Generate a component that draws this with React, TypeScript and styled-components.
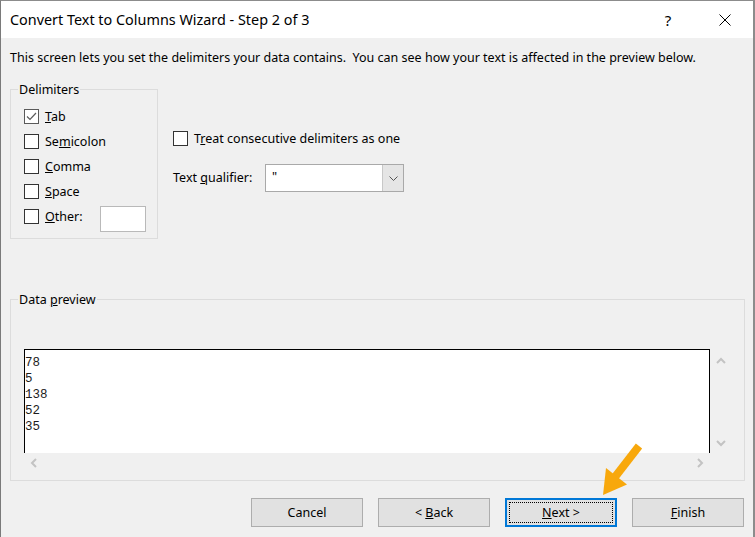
import styled, { createGlobalStyle } from "styled-components";

const GlobalStyle = createGlobalStyle`
  html, body {
    margin: 0;
    padding: 0;
    background: #f0f0f0;
  }
  body {
    font-family: "Noto Sans", "Open Sans", sans-serif;
    font-size: 12.5px;
    color: #000;
  }
`;

const Window = styled.div`
  position: relative;
  width: 755px;
  height: 537px;
  box-sizing: border-box;
  overflow: hidden;
  border-top: 1px solid #8c8c8c;
  border-left: 1px solid #7a7a7a;
  border-right: 2px solid #8c8c8c;
  background: #f0f0f0;
  display: flex;
  flex-direction: column;
`;

const TitleBar = styled.div`
  height: 37px;
  flex-shrink: 0;
  background: #fff;
  display: flex;
  align-items: center;
  padding: 0 5px 0 9px;
`;

const Title = styled.div`
  flex: 1;
  font-size: 14.4px;
  line-height: 20px;
`;

const TitleButton = styled.div`
  width: 46px;
  height: 37px;
  display: flex;
  align-items: center;
  justify-content: center;
  font-size: 15px;
  & + & {
    margin-left: 11px;
  }
`;

const Body = styled.div`
  flex: 1;
  display: flex;
  flex-direction: column;
  padding-left: 9px;
`;

const Intro = styled.p`
  margin: 12px 0 0;
  line-height: 16px;
  white-space: nowrap;
`;

const TopSection = styled.div`
  display: flex;
  margin-top: 23px;
`;

const GroupBox = styled.div<{ $width: number; $height: number }>`
  position: relative;
  box-sizing: border-box;
  width: ${(p) => p.$width}px;
  height: ${(p) => p.$height}px;
  border: 1px solid #dcdcdc;
`;

const GroupCaption = styled.span`
  position: absolute;
  top: -8px;
  left: 7px;
  padding: 0 1px;
  line-height: 16px;
  background: #f0f0f0;
`;

const DelimiterList = styled.div`
  display: flex;
  flex-direction: column;
  padding: 14px 0 0 13px;
`;

const CheckRow = styled.label`
  display: flex;
  align-items: center;
  height: 25px;
  gap: 6px;
  line-height: 16px;
`;

const Box = styled.span<{ $checked?: boolean }>`
  box-sizing: border-box;
  width: 15px;
  height: 15px;
  flex-shrink: 0;
  display: flex;
  align-items: center;
  justify-content: center;
  background: #fff;
  border: 1px solid ${(p) => (p.$checked ? "#5a5a5a" : "#333")};
`;

const OtherInput = styled.div`
  box-sizing: border-box;
  width: 46px;
  height: 26px;
  margin: 5px 11px 0 auto;
  background: #fff;
  border: 1px solid #b9b9b9;
`;

const Options = styled.div`
  display: flex;
  flex-direction: column;
  margin-left: 15px;
  padding-top: 37px;
`;

const QualifierRow = styled.div`
  display: flex;
  align-items: center;
  margin-top: 13px;
`;

const QualifierLabel = styled.span`
  width: 92px;
  line-height: 16px;
`;

const Select = styled.div`
  box-sizing: border-box;
  width: 139px;
  height: 28px;
  display: flex;
  background: #fff;
  border: 1px solid #a9a9a9;
`;

const SelectValue = styled.span`
  flex: 1;
  padding: 4px 0 0 6px;
  line-height: 16px;
`;

const SelectButton = styled.span`
  width: 20px;
  display: flex;
  align-items: center;
  justify-content: center;
  background: #e5e5e5;
  border-left: 1px solid #c8c8c8;
`;

const PreviewGroup = styled(GroupBox)`
  margin-top: 60px;
`;

const PreviewGrid = styled.div`
  display: grid;
  grid-template-columns: 686px 22px;
  grid-template-rows: 104px 22px;
  padding: 49px 0 0 13px;
`;

const PreviewBox = styled.pre`
  box-sizing: border-box;
  margin: 0;
  padding: 5px 0 0;
  background: #fff;
  border: 1px solid #000;
  border-bottom: none;
  font-family: "Liberation Mono", "DejaVu Sans Mono", monospace;
  font-size: 12.5px;
  line-height: 16px;
  color: #1c1c1c;
`;

const VScroll = styled.div`
  display: flex;
  flex-direction: column;
  justify-content: space-between;
  align-items: center;
  padding: 8px 0 6px;
`;

const HScroll = styled.div`
  display: flex;
  justify-content: space-between;
  align-items: center;
  padding: 0 6px 2px 6px;
`;

const ButtonRow = styled.div`
  display: flex;
  justify-content: flex-end;
  gap: 15px;
  width: 734px;
  margin-top: 17px;
`;

const Button = styled.div<{ $focused?: boolean }>`
  position: relative;
  box-sizing: border-box;
  width: 112px;
  height: 29px;
  display: flex;
  align-items: center;
  justify-content: center;
  line-height: 16px;
  background: #e1e1e1;
  border: ${(p) => (p.$focused ? "2px solid #0078d7" : "1px solid #adadad")};
  ${(p) =>
    p.$focused &&
    `
    &::after {
      content: "";
      position: absolute;
      inset: 2px;
      border: 1px dotted #000;
    }
  `}
`;

const Pointer = styled.svg`
  position: absolute;
  left: 595px;
  top: 440px;
  pointer-events: none;
`;

const Chevron = ({ dir }: { dir: "up" | "down" | "left" | "right" }) => {
  const pts = {
    up: "1,6 5,2 9,6",
    down: "1,2 5,6 9,2",
    left: "6,1 2,5 6,9",
    right: "3,1 7,5 3,9",
  }[dir];
  const w = dir === "up" || dir === "down" ? 10 : 9;
  const h = dir === "up" || dir === "down" ? 8 : 10;
  return (
    <svg width={w} height={h} viewBox={`0 0 ${w} ${h}`}>
      <polyline points={pts} fill="none" stroke="#c3c3c3" strokeWidth="2" />
    </svg>
  );
};

const Check = ({ checked }: { checked?: boolean }) => (
  <Box $checked={checked}>
    {checked && (
      <svg width="11" height="9" viewBox="0 0 11 9">
        <polyline points="1,4.5 4,7.5 10,1" fill="none" stroke="#5a5a5a" strokeWidth="1.2" />
      </svg>
    )}
  </Box>
);

const delimiters = [
  { pre: "", key: "T", post: "ab", checked: true },
  { pre: "Se", key: "m", post: "icolon" },
  { pre: "", key: "C", post: "omma" },
  { pre: "", key: "S", post: "pace" },
];

const rows = ["78", "5", "138", "52", "35"];

export default function App() {
  return (
    <>
      <GlobalStyle />
      <Window>
        <TitleBar>
          <Title>Convert Text to Columns Wizard - Step 2 of 3</Title>
          <TitleButton>?</TitleButton>
          <TitleButton>
            <svg width="12" height="12" viewBox="0 0 12 12">
              <path d="M0.5 0.5 L11.5 11.5 M11.5 0.5 L0.5 11.5" stroke="#000" strokeWidth="1" />
            </svg>
          </TitleButton>
        </TitleBar>
        <Body>
          <Intro>
            This screen lets you set the delimiters your data contains.&nbsp; You can see how your
            text is affected in the preview below.
          </Intro>
          <TopSection>
            <GroupBox $width={148} $height={150}>
              <GroupCaption>Delimiters</GroupCaption>
              <DelimiterList>
                {delimiters.map((d) => (
                  <CheckRow key={d.post}>
                    <Check checked={d.checked} />
                    <span>
                      {d.pre}
                      <u>{d.key}</u>
                      {d.post}
                    </span>
                  </CheckRow>
                ))}
                <CheckRow>
                  <Check />
                  <span>
                    <u>O</u>ther:
                  </span>
                  <OtherInput />
                </CheckRow>
              </DelimiterList>
            </GroupBox>
            <Options>
              <CheckRow>
                <Check />
                <span>
                  T<u>r</u>eat consecutive delimiters as one
                </span>
              </CheckRow>
              <QualifierRow>
                <QualifierLabel>
                  Text <u>q</u>ualifier:
                </QualifierLabel>
                <Select>
                  <SelectValue>"</SelectValue>
                  <SelectButton>
                    <svg width="9" height="5" viewBox="0 0 9 5">
                      <polyline points="0.5,0.5 4.5,4.5 8.5,0.5" fill="none" stroke="#555" strokeWidth="1" />
                    </svg>
                  </SelectButton>
                </Select>
              </QualifierRow>
            </Options>
          </TopSection>
          <PreviewGroup $width={735} $height={182}>
            <GroupCaption>
              Data <u>p</u>review
            </GroupCaption>
            <PreviewGrid>
              <PreviewBox>{rows.join("\n")}</PreviewBox>
              <VScroll>
                <Chevron dir="up" />
                <Chevron dir="down" />
              </VScroll>
              <HScroll>
                <Chevron dir="left" />
                <Chevron dir="right" />
              </HScroll>
            </PreviewGrid>
          </PreviewGroup>
          <ButtonRow>
            <Button>Cancel</Button>
            <Button>
              &lt;&nbsp;<u>B</u>ack
            </Button>
            <Button $focused>
              <span>
                <u>N</u>ext &gt;
              </span>
            </Button>
            <Button>
              <span>
                <u>F</u>inish
              </span>
            </Button>
          </ButtonRow>
        </Body>
        <Pointer width="50" height="60" viewBox="0 0 50 60">
          <line x1="43" y1="5" x2="19" y2="36" stroke="#f8a80c" strokeWidth="8" />
          <polygon points="7,54 10,27 31,43.5" fill="#f8a80c" />
        </Pointer>
      </Window>
    </>
  );
}
